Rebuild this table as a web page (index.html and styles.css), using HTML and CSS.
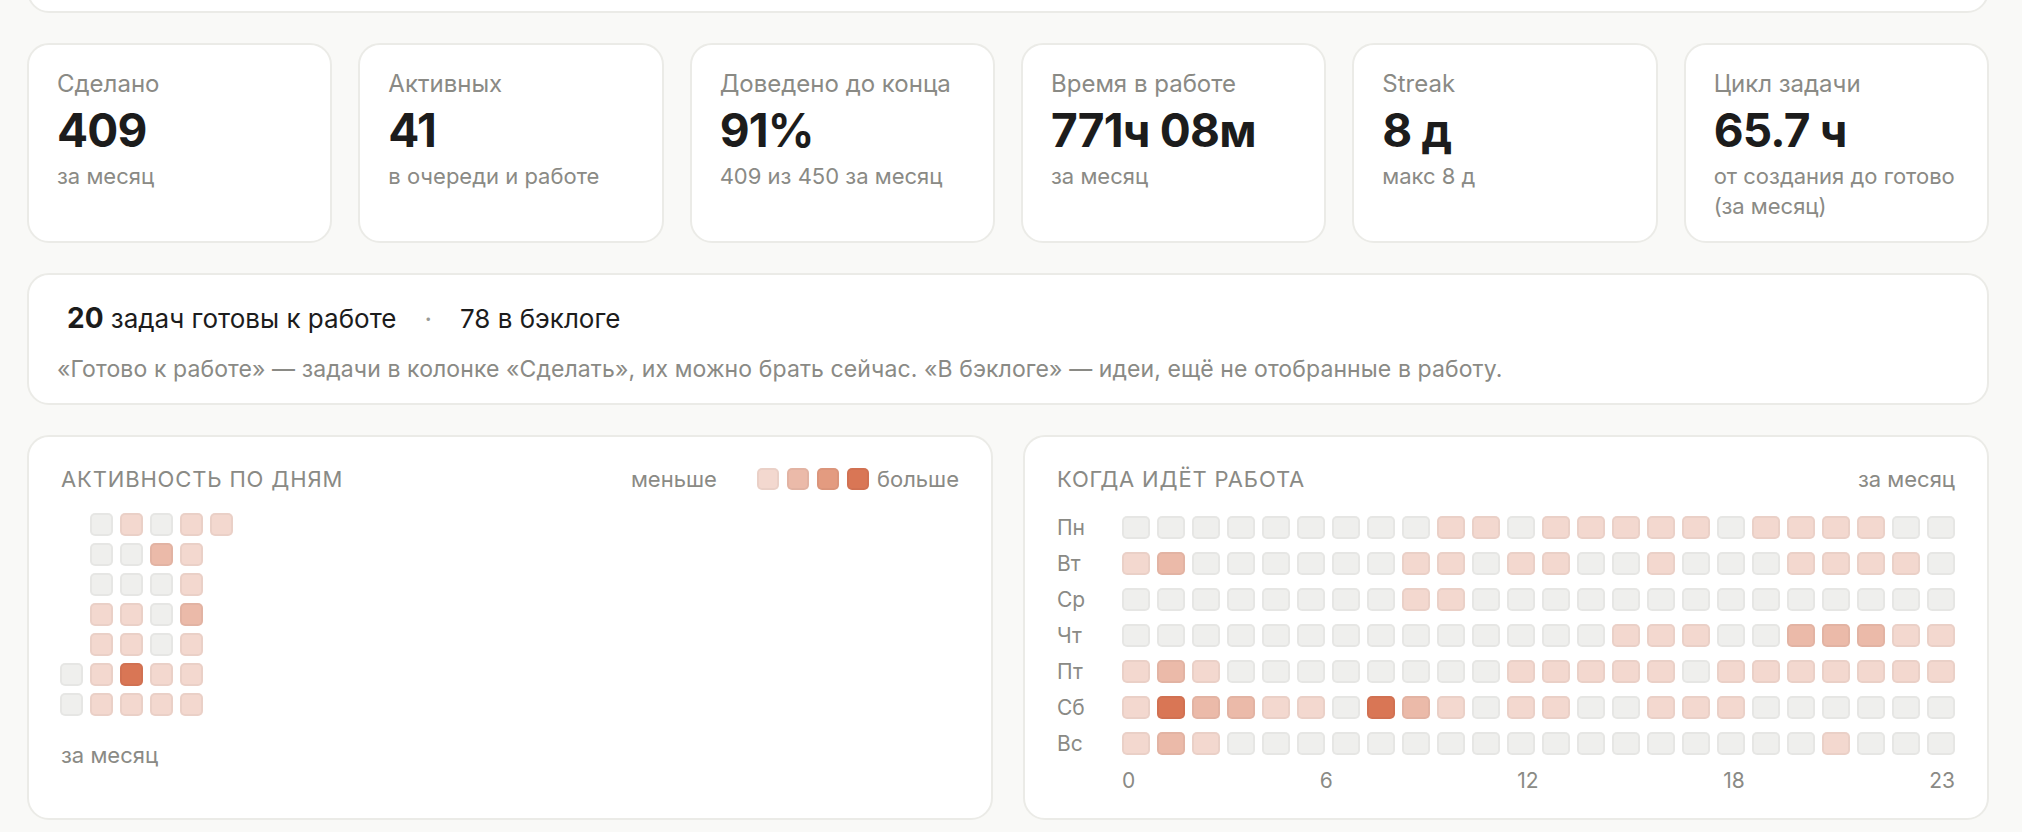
FILE: index.html
```html
<!DOCTYPE html>
<html lang="ru">
<head>
<meta charset="utf-8">
<title>Статистика</title>
<link rel="stylesheet" href="styles.css">
</head>
<body>
<main class="page">
  <section class="card top-card"></section>

  <section class="stats">
    <div class="card stat">
      <div class="stat-label">Сделано</div>
      <div class="stat-value">409</div>
      <div class="stat-sub">за месяц</div>
    </div>
    <div class="card stat">
      <div class="stat-label">Активных</div>
      <div class="stat-value">41</div>
      <div class="stat-sub">в очереди и работе</div>
    </div>
    <div class="card stat">
      <div class="stat-label">Доведено до конца</div>
      <div class="stat-value">91%</div>
      <div class="stat-sub">409 из 450 за месяц</div>
    </div>
    <div class="card stat">
      <div class="stat-label">Время в работе</div>
      <div class="stat-value">771ч 08м</div>
      <div class="stat-sub">за месяц</div>
    </div>
    <div class="card stat">
      <div class="stat-label">Streak</div>
      <div class="stat-value">8 д</div>
      <div class="stat-sub">макс 8 д</div>
    </div>
    <div class="card stat">
      <div class="stat-label">Цикл задачи</div>
      <div class="stat-value">65.7 ч</div>
      <div class="stat-sub">от создания до готово (за месяц)</div>
    </div>
  </section>

  <section class="card banner">
    <div class="banner-line">
      <span class="banner-item"><b class="banner-num">20</b> задач готовы к работе</span>
      <span class="banner-dot">·</span>
      <span class="banner-item">78 в бэклоге</span>
    </div>
    <p class="banner-note">«Готово к работе» — задачи в колонке «Сделать», их можно брать сейчас. «В бэклоге» — идеи, ещё не отобранные в работу.</p>
  </section>

  <section class="charts">
    <div class="card chart">
      <div class="chart-head">
        <h2 class="chart-title">Активность по дням</h2>
        <div class="legend">
          <span class="legend-text legend-less">меньше</span>
          <span class="legend-cell l1"></span>
          <span class="legend-cell l2"></span>
          <span class="legend-cell l3"></span>
          <span class="legend-cell l4"></span>
          <span class="legend-text">больше</span>
        </div>
      </div>
      <div class="days" id="days"></div>
      <div class="chart-note">за месяц</div>
    </div>

    <div class="card chart chart-hours">
      <div class="chart-head">
        <h2 class="chart-title">Когда идёт работа</h2>
        <span class="legend-text">за месяц</span>
      </div>
      <div class="hours" id="hours"></div>
      <div class="hour-axis">
        <span>0</span><span>6</span><span>12</span><span>18</span><span>23</span>
      </div>
    </div>
  </section>
</main>
<script src="app.js"></script>
</body>
</html>
```

FILE: styles.css
```css
* { box-sizing: border-box; }

html, body {
  margin: 0;
  padding: 0;
  background: #f9f9f7;
  font-family: Inter, "Noto Sans", "Liberation Sans", sans-serif;
  color: #1c1c1c;
}

.page {
  width: 2022px;
  padding: 0 33px 0 27px;
  display: flex;
  flex-direction: column;
  gap: 30px;
}

.card {
  background: #ffffff;
  border: 2px solid #ebebe7;
  border-radius: 22px;
}

.top-card {
  margin-top: -80px;
  height: 93px;
}

/* stats */
.stats {
  display: grid;
  grid-template-columns: repeat(6, 1fr);
  column-gap: 26px;
}

.stat {
  padding: 24px 28px 20px;
}

.stat-label {
  font-size: 24px;
  line-height: 30px;
  color: #8a8a85;
}

.stat-value {
  margin-top: 3px;
  font-size: 46px;
  line-height: 56px;
  font-weight: 700;
  color: #1c1c1c;
  letter-spacing: -0.8px;
}

.stat-sub {
  margin-top: 3px;
  font-size: 22px;
  line-height: 30px;
  color: #8a8a85;
}

/* banner */
.banner {
  padding: 25px 28px 19px;
}

.banner-line {
  display: flex;
  align-items: baseline;
  gap: 28px;
  padding-left: 10px;
  font-size: 26px;
  line-height: 36px;
}

.banner-num {
  font-size: 28px;
  font-weight: 700;
}

.banner-dot {
  color: #9a9a95;
}

.banner-note {
  margin: 17px 0 0;
  font-size: 23px;
  line-height: 30px;
  letter-spacing: 0.1px;
  color: #8a8a85;
}

/* charts */
.charts {
  display: grid;
  grid-template-columns: 1fr 1fr;
  column-gap: 30px;
}

.chart {
  padding: 27px 32px 23px;
}

.chart-head {
  display: flex;
  justify-content: space-between;
  align-items: center;
  height: 30px;
}

.chart-title {
  margin: 0;
  font-size: 22px;
  line-height: 30px;
  font-weight: 400;
  text-transform: uppercase;
  letter-spacing: 0.85px;
  color: #8a8a85;
}

.legend {
  display: flex;
  align-items: center;
  gap: 8px;
}

.legend-text {
  font-size: 22px;
  line-height: 30px;
  color: #8a8a85;
}

.legend-less {
  margin-right: 32px;
}

.legend-cell {
  width: 22px;
  height: 22px;
  border-radius: 5px;
  box-shadow: inset 0 0 0 2px rgba(0, 0, 0, 0.035);
}

.cell {
  border-radius: 5px;
  box-shadow: inset 0 0 0 2px rgba(0, 0, 0, 0.035);
}

.l0 { background: #efefed; }
.l1 { background: #f3d8cf; }
.l2 { background: #ebbaa9; }
.l3 { background: #e39b80; }
.l4 { background: #d97655; }
.empty { background: transparent; }

.days {
  margin-top: 19px;
  margin-left: -1px;
  display: grid;
  grid-template-rows: repeat(7, 23px);
  grid-auto-columns: 23px;
  grid-auto-flow: column;
  gap: 7px;
}

.chart-note {
  margin-top: 24px;
  font-size: 22px;
  line-height: 30px;
  color: #8a8a85;
}

.hours {
  margin-top: 22px;
  display: grid;
  grid-template-columns: 58px repeat(24, 28px);
  grid-auto-rows: 23px;
  column-gap: 7px;
  row-gap: 13px;
}

.day-label {
  font-size: 21px;
  line-height: 23px;
  color: #8a8a85;
}

.hour-axis {
  margin-top: 12px;
  margin-left: 65px;
  display: flex;
  justify-content: space-between;
  font-size: 21px;
  line-height: 28px;
  color: #8a8a85;
}
```

FILE: app.js
```js
(function () {
  // Activity by day: columns are weeks, rows are weekdays (Mon..Sun). -1 = no day.
  var dayCols = [
    [-1, -1, -1, -1, -1, 0, 0],
    [0, 0, 0, 1, 1, 1, 1],
    [1, 0, 0, 1, 1, 4, 1],
    [0, 2, 0, 0, 0, 1, 1],
    [1, 1, 1, 2, 1, 1, 1],
    [1, -1, -1, -1, -1, -1, -1]
  ];
  var days = document.getElementById('days');
  dayCols.forEach(function (col) {
    col.forEach(function (v) {
      var d = document.createElement('div');
      d.className = v < 0 ? 'empty' : 'cell l' + v;
      days.appendChild(d);
    });
  });

  // Hours heatmap: rows Mon..Sun, 24 columns.
  var labels = ['Пн', 'Вт', 'Ср', 'Чт', 'Пт', 'Сб', 'Вс'];
  var rows = [
    '000000000110111110111100',
    '120000001101100100011110',
    '000000001100000000000000',
    '000000000000001110022211',
    '121000000001111101111111',
    '142211042101100111000000',
    '121000000000000000001000'
  ];
  var hours = document.getElementById('hours');
  rows.forEach(function (r, i) {
    var l = document.createElement('div');
    l.className = 'day-label';
    l.textContent = labels[i];
    hours.appendChild(l);
    for (var h = 0; h < 24; h++) {
      var c = document.createElement('div');
      c.className = 'cell l' + r.charAt(h);
      hours.appendChild(c);
    }
  });
})();
```
